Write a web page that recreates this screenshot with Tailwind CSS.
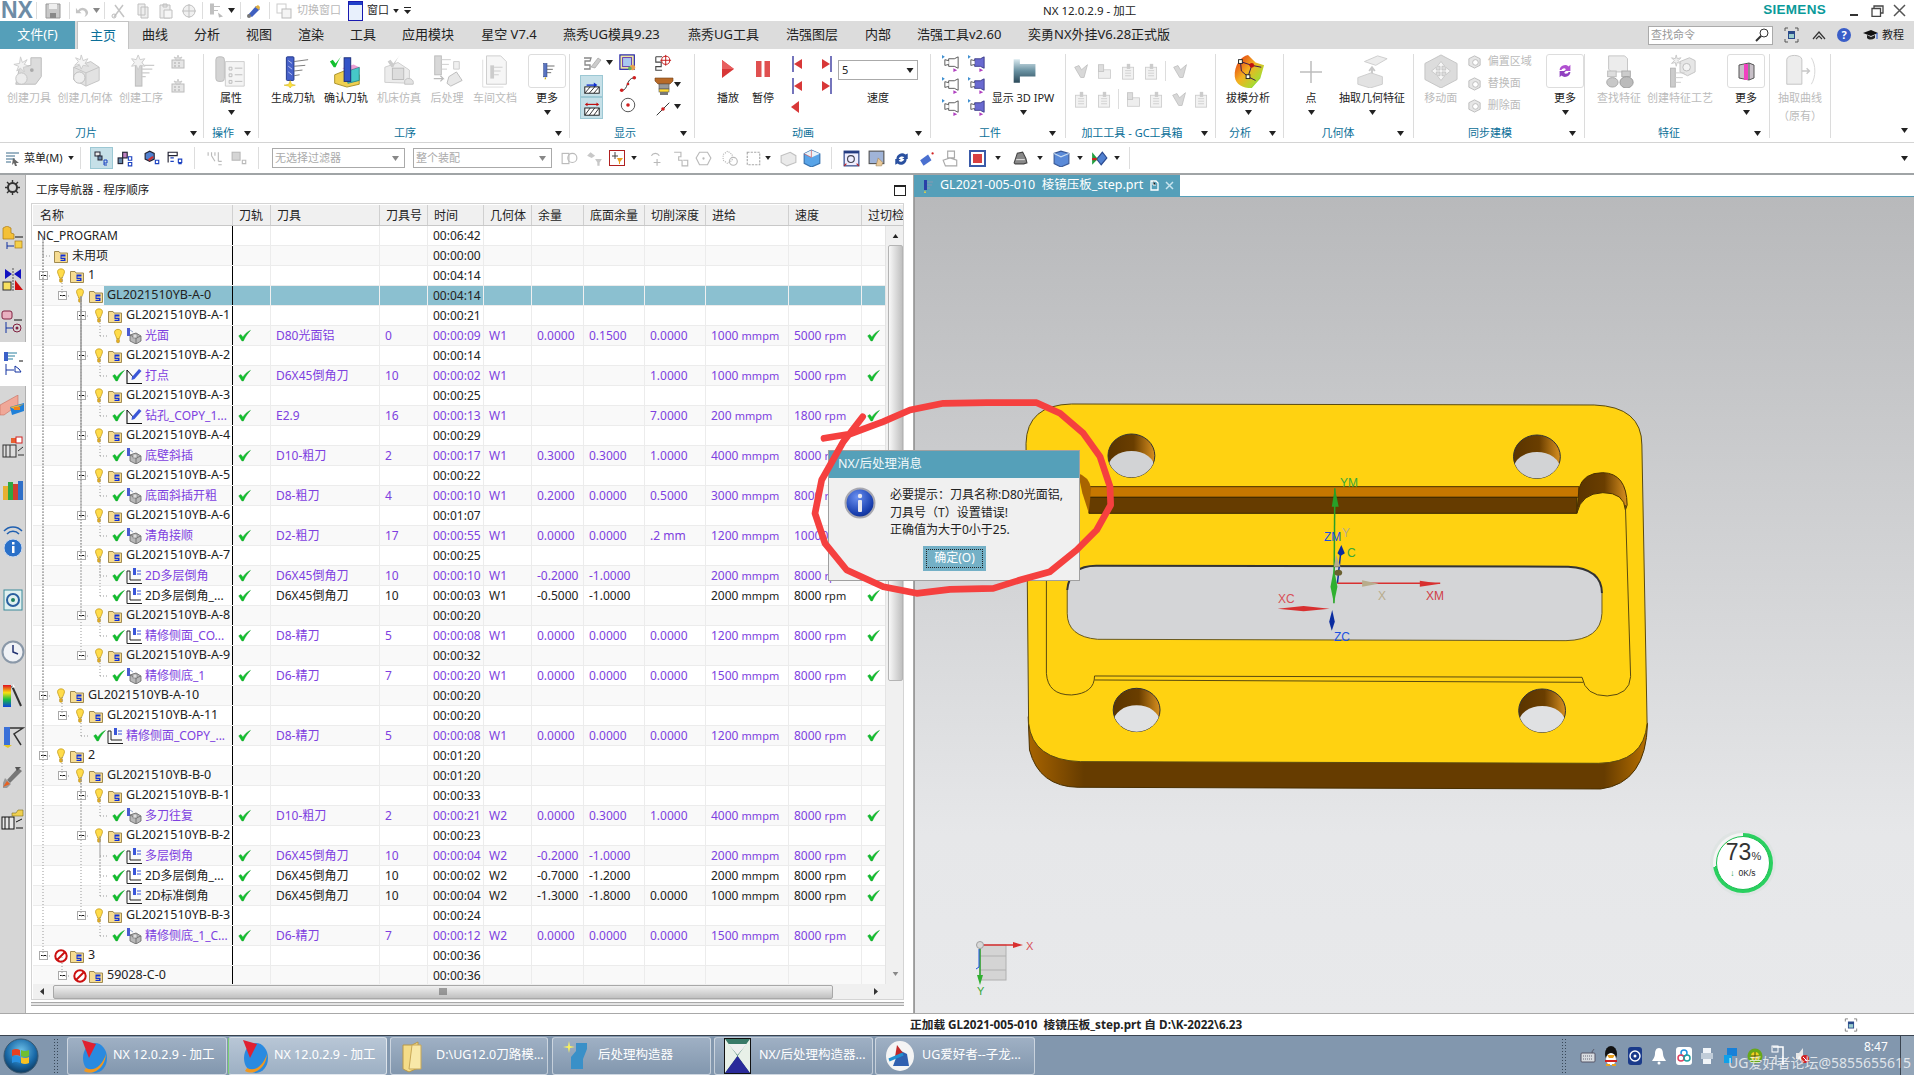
<!doctype html>
<html lang="zh-CN">
  <head>
    <meta charset="UTF-8" />
    <title>NX 12.0.2.9 - 加工</title>
    <script src="https://cdn.jsdelivr.net/npm/@tailwindcss/browser@4"></script>
  </head>
  <body class="font-['Noto_Sans','Noto_Sans_CJK_SC',sans-serif] text-[12px] text-[#222]">
    <!-- icon library -->
    <svg class="absolute w-0 h-0" xmlns="http://www.w3.org/2000/svg">
      <symbol id="arr" viewBox="0 0 7 5"><path d="M0 0h7L3.5 5z" fill="#222" /></symbol>
      <symbol id="arrg" viewBox="0 0 7 5"><path d="M0 0h7L3.5 5z" fill="#888" /></symbol>
      <symbol id="bulb" viewBox="0 0 10 18"><path d="M5 .7c2.6 0 4.3 1.4 4.3 3.6 0 2.6-2.2 5-2.6 8H3.3C2.9 9.300.7 6.900.7 4.300.7 2.100 2.400.7 5 .7z" fill="#ffdc4a" stroke="#c49a18" /><rect x="3.200" y="13" width="3.600" height="4.300" rx="1" fill="#e8b020" stroke="#a88010" stroke-width=".6" /></symbol>
      <symbol id="folder" viewBox="0 0 14 14"><path d="M.5 2.500h4.500l1 1.500h7.500v9.500H.5z" fill="#f6dc92" stroke="#a08a50" /><path d="M6.500 5.500h5v2h-4v1.300h4v3.200h-5v-1.200h3.600v-.9h-3.600z" fill="#1030d8" /></symbol>
      <symbol id="check" viewBox="0 0 14 14"><path d="M.8 7.400 3.200 6l2 2.800C7.200 5.600 9.800 3.200 13.400 1.500 10.600 4.400 8 8 5.800 12.800H4.200z" fill="#12c02e" stroke="#0ca024" stroke-width=".5" /></symbol>
      <symbol id="nosign" viewBox="0 0 14 14"><circle cx="7" cy="7" r="5.700" fill="#fff" stroke="#cc1010" stroke-width="2" /><path d="m3 11 8-8" stroke="#cc1010" stroke-width="2" /></symbol>
      <symbol id="opm" viewBox="0 0 16 16"><path d="M4 7l6-2 5 3v5l-5 3-6-3z" fill="#b8b8b8" stroke="#666" stroke-width=".8" /><path d="M4 7l6 3 5-2M10 10v6" fill="none" stroke="#666" stroke-width=".8" /><rect x="7" y="6" width="4" height="4" fill="#ddd" stroke="#777" stroke-width=".6" /><rect x="1" y="0" width="3" height="8" fill="#4a5ad0" /><path d="M4 2l3 2" stroke="#9ac" /></symbol>
      <symbol id="opd" viewBox="0 0 16 16"><path d="M1 2v13.500h15" fill="none" stroke="#111" stroke-width="1.100" /><path d="m1 2 7 8" stroke="#111" /><path d="m6 9 7-8 2.500 2-7 8-3 1z" fill="#3a56d8" /></symbol>
      <symbol id="opp" viewBox="0 0 16 16"><path d="M1 3v12.500h15M1 3h3v9h11" fill="none" stroke="#222" stroke-width="1" /><rect x="7" y="0" width="3" height="7" fill="#3a56d8" /><path d="M11 3h4M11 6h4" stroke="#3a56d8" /></symbol>
      <symbol id="ct" viewBox="0 0 36 36"><path d="M20 4h11v20l-6 8H4l4-18 12-2z" fill="#dcdcdc" stroke="#bbb" /><circle cx="21" cy="17" r="2" fill="#aaa" /><path d="M9 3l2 6 5-3-3 5 5 2-6 1 1 5-4-4-4 3 2-5-5-2 6-1z" fill="#f2f2f2" stroke="#ccc" /><circle cx="10" cy="26" r="6" fill="#ececec" stroke="#c4c4c4" /></symbol>
      <symbol id="cg" viewBox="0 0 36 36"><path d="M6 14l18-6 9 6v14l-14 6-13-7z" fill="#e2e2e2" stroke="#c4c4c4" /><path d="M6 14l13 6 14-6M19 20v14" fill="none" stroke="#c4c4c4" /><circle cx="12" cy="25" r="6" fill="#eee" stroke="#bbb" /><path d="M14 1l2 6 5-2-3 5 4 3-6-1-2 4-2-5-5 1 4-4-3-4 5 2z" fill="#f4f4f4" stroke="#ccc" /></symbol>
      <symbol id="co" viewBox="0 0 36 36"><rect x="12" y="8" width="7" height="26" fill="#d4d4d4" stroke="#bbb" /><path d="M19 12h13M19 16h11M19 20h8M19 24h4" stroke="#ccc" stroke-width="1.400" /><path d="M15 1l2 5 5-1-3 4 3 4-5-1-2 5-2-5-5 1 3-4-3-4 5 1z" fill="#f2f2f2" stroke="#ccc" /></symbol>
      <symbol id="cs" viewBox="0 0 16 16"><rect x="2" y="6" width="12" height="8" fill="#e6e6e6" stroke="#bbb" /><path d="M4 9h2M8 9h2M4 12h2M8 12h2" stroke="#aaa" /><path d="M8 1l1 3 3-1-2 3H6L4 3l3 1z" fill="#ddd" stroke="#bbb" stroke-width=".6" /></symbol>
      <symbol id="prop" viewBox="0 0 36 36"><rect x="2" y="3" width="9" height="26" rx="3" fill="#d4d4d4" stroke="#bbb" /><path d="M12 8h20v26H12z" fill="#f4f4f4" stroke="#ccc" /><path d="M16 14h3v3h-3zM22 15h8M16 21h3v3h-3zM22 22h8M16 28h3v3h-3zM22 29h8" fill="none" stroke="#bbb" /></symbol>
      <symbol id="gen" viewBox="0 0 36 36"><rect x="11" y="3" width="8" height="25" rx="1" fill="#4660c8" stroke="#1e3488" /><path d="M13 7l4 3M13 13l4 3M13 19l4 3" stroke="#b8c4f0" /><path d="M19 8 34 6M19 13l12-1M19 18l9-1M19 23l6-1" stroke="#777" /><path d="M15 28l1.500 4 4 1-4 1-1.500 2-1.500-2-5-1 5-1z" fill="#ffe23c" stroke="#c8a800" stroke-width=".5" /></symbol>
      <symbol id="ver" viewBox="0 0 36 36"><path d="M6 22l10-4 16 4v10l-13 3-13-4z" fill="#f0d050" stroke="#a89028" /><path d="M20 18l12-4v14l-12 3z" fill="#46c8c8" stroke="#2a8a8a" /><path d="M20 18l12-4-6-3-12 4z" fill="#e060b8" opacity=".6" /><rect x="16" y="4" width="7" height="25" fill="#3454c8" stroke="#1a2c78" /><path d="M1 8l3-2 3 4 7-9c-3 4-5 8-7 13H5z" fill="#12c02e" /></symbol>
      <symbol id="mach" viewBox="0 0 36 36"><path d="M3 30V14l14-5 12 8v14z" fill="#ececec" stroke="#ccc" /><rect x="11" y="15" width="12" height="12" fill="#ddd" stroke="#bbb" /><path d="M6 8l3-2 3 4 7-9c-3 4-5 8-7 13h-2z" fill="#ccc" /><path d="M24 28a5 5 0 0 1 9 4H24z" fill="#e2e2e2" stroke="#c4c4c4" /></symbol>
      <symbol id="post" viewBox="0 0 36 36"><rect x="5" y="2" width="7" height="20" fill="#d8d8d8" stroke="#bbb" /><path d="M12 6h10M12 11h8M12 16h6" stroke="#ccc" /><path d="M20 24l8-5 6 9-12 6-4-3z" fill="#e8e8e8" stroke="#bbb" /><path d="M4 26h10l-3-3m3 3-3 3" fill="none" stroke="#bbb" stroke-width="1.300" /><path d="M25 8h6v8h-6z" fill="#f0f0f0" stroke="#ccc" /></symbol>
      <symbol id="docu" viewBox="0 0 36 36"><path d="M9 2h15l6 6v24H9z" fill="#f6f6f6" stroke="#ccc" /><path d="M5 6v29h22" fill="none" stroke="#ddd" /><rect x="13" y="12" width="4" height="14" fill="#ccc" /><path d="M17 14h9M17 18h7M17 22h5" stroke="#ccc" /></symbol>
      <symbol id="more" viewBox="0 0 24 24"><rect x="8" y="3" width="4" height="16" fill="#5a74c0" stroke="#223a80" stroke-width=".6" /><path d="M12 6h9M12 10h7M12 14h5" stroke="#555" /><path d="M10 19l1 3h-2z" fill="#c8a800" /></symbol>
      <symbol id="hatch1" viewBox="0 0 20 20"><path d="M4 9h10" stroke="#1030d0" stroke-width="1.500" /><path d="M12 6l4 3-4 3z" fill="#1030d0" /><rect x="2" y="11" width="16" height="7" fill="#fff" stroke="#111" /><path d="M2 18l6-7M7 18l6-7M12 18l6-7" stroke="#222" /></symbol>
      <symbol id="hatch2" viewBox="0 0 20 20"><path d="M4 6h12" stroke="#c01010" stroke-width="1.300" /><path d="M2 6l3-2v4zM18 6l-3-2v4z" fill="#c01010" /><rect x="2" y="10" width="16" height="8" fill="#fff" stroke="#111" /><path d="M2 18l6-8M7 18l6-8M12 18l6-8" stroke="#222" /></symbol>
      <symbol id="disp1" viewBox="0 0 20 20"><path d="M2 4h7l-1 3H3v4h5v4H2" fill="none" stroke="#888" stroke-width="1.300" /><path d="M9 13 16 4l3 2-6 8z" fill="#ccc" stroke="#999" stroke-width=".6" /></symbol>
      <symbol id="colorbox" viewBox="0 0 20 20"><rect x="1" y="1" width="16" height="16" fill="#f0e8a0" stroke="#2020a8" stroke-width="1.300" /><rect x="4" y="4" width="10" height="10" fill="#a8c8f0" stroke="#6030b0" /><circle cx="15" cy="15" r="3" fill="#e8a050" /><circle cx="12" cy="16" r="2" fill="#60b060" /></symbol>
      <symbol id="curve" viewBox="0 0 20 20"><path d="M3 17c8 0 4-13 14-14" fill="none" stroke="#222" /><circle cx="3" cy="17" r="2" fill="#d02020" /><circle cx="17" cy="3" r="2" fill="#d02020" /><circle cx="10" cy="10" r="1.500" fill="#d02020" /></symbol>
      <symbol id="circ" viewBox="0 0 20 20"><circle cx="10" cy="10" r="7.500" fill="#fff" stroke="#444" /><circle cx="10" cy="10" r="2" fill="#d02020" /></symbol>
      <symbol id="tgt" viewBox="0 0 20 20"><path d="M2 3h7M2 3v6h6v5H2v4h7" fill="none" stroke="#444" stroke-width="1.200" /><circle cx="13" cy="7" r="4.500" fill="none" stroke="#c01010" /><path d="M13 1v12M7 7h12" stroke="#c01010" /></symbol>
      <symbol id="cutter" viewBox="0 0 20 20"><path d="M1 2h18v3l-3 3H4L1 5z" fill="#b86a28" stroke="#70401a" stroke-width=".6" /><rect x="5" y="8" width="10" height="5" fill="#999" stroke="#555" stroke-width=".6" /><rect x="5" y="13" width="10" height="3" fill="#ffd830" stroke="#555" stroke-width=".6" /><rect x="6" y="16" width="8" height="3" fill="#777" /></symbol>
      <symbol id="line" viewBox="0 0 20 20"><path d="M3 17 17 3" stroke="#222" /><circle cx="10" cy="10" r="2" fill="#d02020" /></symbol>
      <symbol id="step" viewBox="0 0 14 16"><path d="M3 0v16" stroke="#2a2a98" stroke-width="1.300" /><path d="M12 3v10L4 8z" fill="#d83838" /></symbol>
      <symbol id="step2" viewBox="0 0 14 16"><path d="M11 0v16" stroke="#2a2a98" stroke-width="1.300" /><path d="M2 3v10l8-5z" fill="#d83838" /></symbol>
      <symbol id="play" viewBox="0 0 20 20"><path d="M4 1v18l12-9z" fill="#d83838" /><path d="M4 1l12 9H4z" fill="#e86060" /></symbol>
      <symbol id="pause" viewBox="0 0 20 20"><rect x="3" y="2" width="5.500" height="16" fill="#e05050" /><rect x="11.500" y="2" width="5.500" height="16" fill="#e05050" /></symbol>
      <symbol id="ipw1" viewBox="0 0 20 20"><path d="M7 5h6l4-2v12l-4-2H7V5z" fill="#fff" stroke="#444" stroke-width=".9" /><path d="M7 7 3 6v6l4-1" fill="#fff" stroke="#444" stroke-width=".9" /><path d="M0 1l3 2-3 2z" fill="#4090d0" /><path d="M12 15l4 2-4 2z" fill="#b040c0" /></symbol>
      <symbol id="ipw2" viewBox="0 0 20 20"><path d="M7 5h6l4-2v12l-4-2H7V5z" fill="#6a6ad0" stroke="#333380" stroke-width=".9" /><path d="M7 7 3 6v6l4-1" fill="#fff" stroke="#444" stroke-width=".9" /><path d="M0 1l3 2-3 2z" fill="#4090d0" /><path d="M12 15l4 2-4 2z" fill="#b040c0" /></symbol>
      <symbol id="ipw" viewBox="0 0 36 36"><defs><linearGradient id="gi" x1="0" y1="0" x2="0" y2="1"><stop offset="0" stop-color="#d8e8ee" /><stop offset=".5" stop-color="#6890a0" /><stop offset="1" stop-color="#2c4a5a" /></linearGradient></defs><path d="M6 3h8v6h20v16H14v8H6z" fill="url(#gi)" /></symbol>
      <symbol id="gv" viewBox="0 0 20 20"><path d="M2 5l5-2 3 5 7-6-4 15H9z" fill="#d8d8d8" stroke="#c0c0c0" /></symbol>
      <symbol id="gb" viewBox="0 0 20 20"><rect x="3" y="8" width="14" height="10" fill="#eee" stroke="#ccc" /><rect x="3" y="2" width="6" height="8" fill="#ddd" stroke="#c4c4c4" /></symbol>
      <symbol id="gd" viewBox="0 0 20 20"><rect x="3" y="5" width="13" height="14" fill="#f2f2f2" stroke="#ccc" /><path d="M6 9h7M6 12h7M6 15h7" stroke="#ccc" /><rect x="8" y="1" width="4" height="6" fill="#ccc" /></symbol>
      <symbol id="draft" viewBox="0 0 36 36"><defs><linearGradient id="gd2" x1="0" y1="0" x2="1" y2="1"><stop offset="0" stop-color="#e02010" /><stop offset=".45" stop-color="#f4b020" /><stop offset=".75" stop-color="#b0d830" /><stop offset="1" stop-color="#20c040" /></linearGradient></defs><path d="M4 24C3 12 11 2 18 1l8 8 9 3-4 14-9 10C12 36 5 32 4 24z" fill="url(#gd2)" /><path d="M10 8l12 4-4 12-7-6zM22 12l10 2M18 24l8 4" fill="none" stroke="#331055" /><rect x="8" y="6" width="4" height="4" fill="#ffe" stroke="#222" /><rect x="16" y="22" width="4" height="4" fill="#ffe" stroke="#222" /><circle cx="22" cy="12" r="2.500" fill="#c01010" /></symbol>
      <symbol id="plus" viewBox="0 0 24 24"><path d="M12 1v22M1 12h22" stroke="#bdbdbd" stroke-width="1.500" /></symbol>
      <symbol id="extract" viewBox="0 0 36 36"><path d="M10 8l14-6 10 3-12 7z" fill="#ececec" stroke="#ccc" /><path d="M18 26V14m-3 4 3-4 3 4" fill="none" stroke="#c8c8c8" stroke-width="2" /><path d="M3 25l14-5 12 4v8l-13 4-13-4z" fill="#e2e2e2" stroke="#ccc" /></symbol>
      <symbol id="movef" viewBox="0 0 36 36"><path d="M18 1 35 10v17l-17 9L1 27V10z" fill="#dcdcdc" stroke="#c4c4c4" /><path d="M18 8l4 5h-3v4h4v-3l5 4-5 4v-3h-4v4h3l-4 5-4-5h3v-4h-4v3l-5-4 5-4v3h4v-4h-3z" fill="#f6f6f6" stroke="#bbb" stroke-width=".7" /></symbol>
      <symbol id="gsm" viewBox="0 0 16 16"><path d="M2 5l6-3 6 3v7l-6 3-6-3z" fill="#e6e6e6" stroke="#bbb" /><circle cx="9" cy="9" r="3" fill="#fff" stroke="#bbb" /></symbol>
      <symbol id="sync" viewBox="0 0 20 20"><path d="M4 9a6 6 0 0 1 10-4l2-2v7h-7l2-2a3 3 0 0 0-5 1z" fill="#b050d0" /><path d="M16 11a6 6 0 0 1-10 4l-2 2v-7h7l-2 2a3 3 0 0 0 5-1z" fill="#9040c0" /></symbol>
      <symbol id="feat" viewBox="0 0 36 36"><path d="M7 2h17l3 3v14H10L7 16z" fill="#ececec" stroke="#c4c4c4" /><rect x="6" y="18" width="9" height="6" fill="#ddd" stroke="#bbb" /><rect x="21" y="18" width="9" height="6" fill="#ccc" stroke="#aaa" /><ellipse cx="11" cy="30" rx="6" ry="5" fill="#c8c8c8" stroke="#a8a8a8" /><ellipse cx="26" cy="30" rx="7" ry="6" fill="#bbb" stroke="#999" /></symbol>
      <symbol id="cfeat" viewBox="0 0 36 36"><path d="M18 8l10-4 6 3v12l-8 4-8-4z" fill="#e6e6e6" stroke="#c4c4c4" /><circle cx="25" cy="14" r="4" fill="#f4f4f4" stroke="#bbb" /><rect x="8" y="15" width="5" height="20" fill="#ccc" stroke="#b4b4b4" /><path d="M13 20h10M13 25h8M13 30h6" stroke="#ccc" /><path d="M14 1l1 4 4-1-3 3 3 3-4-1-1 4-1-4-4 1 3-3-3-3 4 1z" fill="#f0f0f0" stroke="#c8c8c8" /></symbol>
      <symbol id="feat2" viewBox="0 0 20 20"><path d="M3 4l10-2 5 2v13l-5 2-10-2z" fill="#c8c0c8" stroke="#555" /><rect x="8" y="3" width="4" height="16" fill="#f040c0" /><path d="M13 2v17" stroke="#555" /></symbol>
      <symbol id="curvex" viewBox="0 0 36 36"><path d="M4 6c0-6 16-6 16 0v26H4z" fill="#ededed" stroke="#c4c4c4" /><path d="M20 18h8m-3-3 3 3-3 3" fill="none" stroke="#c8c8c8" stroke-width="1.500" /><path d="M30 4c5 8 5 20 0 28" fill="none" stroke="#d4d4d4" /></symbol>
    </svg>

    <div class="relative w-[1914px] h-[1075px] overflow-hidden bg-white flex flex-col">
      <!-- title bar -->
      <header class="h-[21px] flex items-center bg-white shrink-0">
        <div class="w-[1043px] flex items-center">
          <span class="w-[36px] pl-[1px] font-['Liberation_Sans'] font-bold text-[23px] leading-[21px] text-[#6d8ca6]">NX</span>
          <i class="w-px h-[17px] bg-[#ddd]"></i>
          <svg class="ml-[8px] w-[16px] h-[16px]" viewBox="0 0 16 16"><path d="M1 1h14v14H1z" fill="#c8c8c8" stroke="#999" /><rect x="4" y="1" width="8" height="5" fill="#eee" /><rect x="5" y="10" width="6" height="5" fill="#888" /></svg>
          <i class="ml-[8px] w-px h-[17px] bg-[#ddd]"></i>
          <svg class="ml-[5px] w-[15px] h-[15px]" viewBox="0 0 16 16"><path d="M3 8a6 6 0 0 1 11 2c0 2-2 4-4 5 1-2 2-3 1-5-1-3-4-3-6-1l2 2H1V5z" fill="#c4c4c4" /></svg>
          <svg class="ml-[3px] w-[7px] h-[5px]"><use href="#arrg" /></svg>
          <i class="ml-[4px] w-px h-[17px] bg-[#ddd]"></i>
          <svg class="ml-[6px] w-[16px] h-[16px]" viewBox="0 0 16 16"><path d="M3 14 12 2M13 14 4 2" stroke="#c4c4c4" stroke-width="1.500" /><circle cx="3" cy="13" r="2" fill="none" stroke="#bbb" /></svg>
          <svg class="ml-[8px] w-[16px] h-[16px]" viewBox="0 0 16 16"><path d="M3 1h7v11H3zM6 4h7v11H6z" fill="#eee" stroke="#c0c0c0" /></svg>
          <svg class="ml-[7px] w-[16px] h-[16px]" viewBox="0 0 16 16"><path d="M2 2h10v13H2zM5 1h4v3H5z" fill="#eee" stroke="#c0c0c0" /><path d="M6 7h8v8H6z" fill="#f6f6f6" stroke="#c0c0c0" /></svg>
          <svg class="ml-[7px] w-[16px] h-[16px]" viewBox="0 0 16 16"><circle cx="8" cy="8" r="6" fill="#f0f0f0" stroke="#c0c0c0" /><path d="M1 8h14M8 1v14" stroke="#c0c0c0" /></svg>
          <i class="ml-[5px] w-px h-[17px] bg-[#ddd]"></i>
          <svg class="ml-[6px] w-[16px] h-[17px]" viewBox="0 0 16 16"><rect x="1" y="1" width="4" height="11" fill="#c0c0c0" /><path d="M5 4h6M5 8h4" stroke="#c0c0c0" /><path d="M9 10l5 4-4 1z" fill="#bbb" /></svg>
          <svg class="ml-[3px] w-[7px] h-[5px]"><use href="#arr" /></svg>
          <i class="ml-[5px] w-px h-[17px] bg-[#ddd]"></i>
          <svg class="ml-[5px] w-[16px] h-[16px]" viewBox="0 0 16 16"><path d="M2 12 10 3l4 3-8 8z" fill="#4060c0" /><path d="M9 4l4 3 1-3-2-2z" fill="#e0b040" /><circle cx="3" cy="13" r="2" fill="#777" /></svg>
          <i class="ml-[7px] w-px h-[17px] bg-[#ddd]"></i>
          <svg class="ml-[6px] w-[16px] h-[16px]" viewBox="0 0 16 16"><rect x="1" y="1" width="9" height="9" fill="none" stroke="#ccc" /><rect x="6" y="6" width="9" height="9" fill="#f4f4f4" stroke="#bbb" /></svg>
          <span class="ml-[5px] w-[44px] text-[11px] text-[#b8b8b8] whitespace-nowrap">切换窗口</span>
          <svg class="ml-[7px] w-[15px] h-[20px]" viewBox="0 0 15 20"><rect x=".5" y=".5" width="14" height="19" fill="#e8f0fc" stroke="#1a1ab0" /><rect x="1" y="1" width="13" height="3" fill="#2040c8" /></svg>
          <span class="ml-[4px] w-[24px] text-[11px] whitespace-nowrap">窗口</span>
          <svg class="ml-[2px] w-[6px] h-[4px]"><use href="#arr" /></svg>
          <svg class="ml-[5px] w-[7px] h-[7px]" viewBox="0 0 7 7"><path d="M0 0h7v1H0zM0 3h7L3.500 7z" fill="#222" /></svg>
        </div>
        <span class="text-[11.500px] whitespace-nowrap">NX 12.0.2.9 - 加工</span>
        <div class="flex-1 flex items-center justify-end">
          <span class="font-['Liberation_Sans'] font-bold text-[13.500px] tracking-[.3px] text-[#0a9a9a]">SIEMENS</span>
          <i class="ml-[24px] w-[8px] h-[2px] mt-[8px] bg-[#333]"></i>
          <svg class="ml-[13px] w-[13px] h-[12px]" viewBox="0 0 13 12"><path d="M3 3V1h9v7h-2M1 3.500h8.500v8H1z" fill="none" stroke="#444" stroke-width="1.300" /></svg>
          <svg class="ml-[9px] mr-[8px] w-[13px] h-[13px]" viewBox="0 0 13 13"><path d="M1 1l11 11M12 1 1 12" stroke="#555" stroke-width="1.500" /></svg>
        </div>
      </header>

      <!-- tabs -->
      <nav class="h-[28px] bg-[#dcdcdc] flex items-center shrink-0 text-[13px] text-[#222]">
        <span class="w-[75px] h-full bg-[#559fb9] text-white flex items-center justify-center">文件(F)</span>
        <span class="ml-[2px] w-[52px] h-full bg-white border-t border-x border-[#c4c4c4] text-[#0b6f98] flex items-center justify-center">主页</span>
        <span class="w-[52px] text-center">曲线</span>
        <span class="w-[52px] text-center">分析</span>
        <span class="w-[52px] text-center">视图</span>
        <span class="w-[52px] text-center">渲染</span>
        <span class="w-[52px] text-center">工具</span>
        <span class="w-[78px] text-center">应用模块</span>
        <span class="w-[84px] text-center whitespace-nowrap">星空 V7.4</span>
        <span class="ml-[12px] w-[125px] whitespace-nowrap">燕秀UG模具9.23</span>
        <span class="w-[98px] whitespace-nowrap">燕秀UG工具</span>
        <span class="w-[79px] whitespace-nowrap">浩强图层</span>
        <span class="w-[52px] whitespace-nowrap">内部</span>
        <span class="w-[111px] whitespace-nowrap">浩强工具v2.60</span>
        <span class="w-[200px] whitespace-nowrap">奕勇NX外挂V6.28正式版</span>
        <span class="ml-[420px] w-[125px] h-[19px] bg-white border border-[#aaa] flex items-center justify-between pl-[2px] pr-[3px] text-[11px] text-[#999]">查找命令
          <svg class="w-[14px] h-[14px]" viewBox="0 0 14 14"><circle cx="9" cy="5" r="4" fill="#fff" stroke="#333" /><path d="M6 8 1 13" stroke="#333" stroke-width="2" /></svg>
        </span>
        <svg class="ml-[11px] w-[15px] h-[16px]" viewBox="0 0 15 16"><path d="M1 4V1h3M11 1h3v3M14 12v3h-3M4 15H1v-3" fill="none" stroke="#555" /><rect x="4" y="4" width="7" height="8" fill="#2a4a8a" /><rect x="5" y="7" width="5" height="4" fill="#9cc" /></svg>
        <svg class="ml-[13px] w-[14px] h-[10px]" viewBox="0 0 14 10"><path d="M1 9l6-7 6 7M4 9l3-3 3 3" fill="none" stroke="#333" stroke-width="1.200" /></svg>
        <span class="ml-[11px] w-[14px] h-[14px] rounded-full bg-[#3a5ec8] text-white text-[11px] leading-[14px] font-bold text-center">?</span>
        <svg class="ml-[12px] w-[15px] h-[11px]" viewBox="0 0 15 11"><path d="M0 3 8 0l7 3-7 3z" fill="#111" /><path d="M4 5v3c2 2 5 2 8 0V5L8 7z" fill="#222" /><path d="M14 3v6" stroke="#1a50d0" /></svg>
        <span class="ml-[4px] text-[11px] whitespace-nowrap">教程</span>
      </nav>

      <!-- ribbon -->
      <section class="h-[94px] pt-[5px] flex shrink-0 bg-white border-b border-[#d4d4d4]">
        <div class="w-[204px] h-[84px] flex flex-col border-r border-[#dcdcdc]">
          <div class="h-[70px] flex text-[11px] text-[#bbb]">
            <div class="ml-[6px] w-[46px] flex flex-col items-center"><svg class="w-[36px] h-[34px]"><use href="#ct" /></svg><span class="mt-[2px] whitespace-nowrap">创建刀具</span></div>
            <div class="ml-[8px] w-[50px] flex flex-col items-center"><svg class="w-[36px] h-[34px]"><use href="#cg" /></svg><span class="mt-[2px] whitespace-nowrap">创建几何体</span></div>
            <div class="ml-[8px] w-[46px] flex flex-col items-center"><svg class="w-[36px] h-[34px]"><use href="#co" /></svg><span class="mt-[2px] whitespace-nowrap">创建工序</span></div>
            <div class="ml-[6px] flex flex-col gap-[8px]"><svg class="w-[16px] h-[16px]"><use href="#cs" /></svg><svg class="w-[16px] h-[16px]"><use href="#cs" /></svg></div>
          </div>
          <div class="h-[14px] pt-[4px] flex items-center text-[11px] text-[#0b6f98]"><span class="w-[190px] text-center pr-[18px]">刀片</span><svg class="w-[7px] h-[5px]"><use href="#arr" /></svg></div>
        </div>

        <div class="w-[55px] h-[84px] flex flex-col border-r border-[#dcdcdc]">
          <div class="h-[70px] flex flex-col items-center text-[11px]"><svg class="w-[36px] h-[34px]"><use href="#prop" /></svg><span class="mt-[2px]">属性</span><svg class="mt-[3px] w-[7px] h-[5px]"><use href="#arr" /></svg></div>
          <div class="h-[14px] pt-[4px] flex items-center text-[11px] text-[#0b6f98]"><span class="ml-[8px] w-[32px]">操作</span><svg class="w-[7px] h-[5px]"><use href="#arr" /></svg></div>
        </div>

        <div class="w-[311px] h-[84px] flex flex-col border-r border-[#dcdcdc]">
          <div class="h-[70px] flex text-[11px]">
            <div class="ml-[10px] w-[48px] flex flex-col items-center"><svg class="w-[36px] h-[34px]"><use href="#gen" /></svg><span class="mt-[2px] whitespace-nowrap">生成刀轨</span></div>
            <div class="ml-[5px] w-[48px] flex flex-col items-center"><svg class="w-[36px] h-[34px]"><use href="#ver" /></svg><span class="mt-[2px] whitespace-nowrap">确认刀轨</span></div>
            <div class="ml-[5px] w-[48px] flex flex-col items-center text-[#bbb]"><svg class="w-[36px] h-[34px]"><use href="#mach" /></svg><span class="mt-[2px] whitespace-nowrap">机床仿真</span></div>
            <div class="w-[48px] flex flex-col items-center text-[#bbb]"><svg class="w-[36px] h-[34px]"><use href="#post" /></svg><span class="mt-[2px]">后处理</span></div>
            <div class="w-[48px] flex flex-col items-center text-[#bbb]"><svg class="w-[36px] h-[34px]"><use href="#docu" /></svg><span class="mt-[2px] whitespace-nowrap">车间文档</span></div>
            <div class="ml-[9px] w-[38px] flex flex-col items-center"><span class="w-[38px] h-[34px] rounded-[3px] border border-[#ddd] flex items-center justify-center"><svg class="w-[20px] h-[20px]"><use href="#more" /></svg></span><span class="mt-[2px]">更多</span><svg class="mt-[3px] w-[7px] h-[5px]"><use href="#arr" /></svg></div>
          </div>
          <div class="h-[14px] pt-[4px] flex items-center text-[11px] text-[#0b6f98]"><span class="w-[296px] text-center pr-[4px]">工序</span><svg class="w-[7px] h-[5px]"><use href="#arr" /></svg></div>
        </div>

        <div class="w-[125px] h-[84px] flex flex-col border-r border-[#dcdcdc]">
          <div class="h-[70px] flex">
            <div class="ml-[10px] w-[23px] flex flex-col items-center">
              <svg class="h-[20px] w-[20px] mb-[1px]"><use href="#disp1" /></svg>
              <span class="w-[23px] h-[22px] bg-[#c6e0e8] border border-[#9cc8d4] flex items-center justify-center"><svg class="w-[18px] h-[18px]"><use href="#hatch1" /></svg></span>
              <span class="w-[23px] h-[22px] bg-[#c6e0e8] border border-[#9cc8d4] flex items-center justify-center"><svg class="w-[18px] h-[18px]"><use href="#hatch2" /></svg></span>
            </div>
            <div class="ml-[3px] pt-[6px]"><svg class="w-[7px] h-[5px]"><use href="#arr" /></svg></div>
            <div class="ml-[6px] w-[20px] flex flex-col gap-[3px]"><svg class="w-[18px] h-[18px]"><use href="#colorbox" /></svg><svg class="w-[18px] h-[18px]"><use href="#curve" /></svg><svg class="w-[18px] h-[18px]"><use href="#circ" /></svg></div>
            <div class="ml-[15px] w-[18px] flex flex-col gap-[3px]"><svg class="w-[18px] h-[18px]"><use href="#tgt" /></svg><svg class="w-[20px] h-[22px]"><use href="#cutter" /></svg><svg class="w-[18px] h-[18px]"><use href="#line" /></svg></div>
            <div class="ml-[2px] pt-[28px] flex flex-col gap-[17px]"><svg class="w-[7px] h-[5px]"><use href="#arr" /></svg><svg class="w-[7px] h-[5px]"><use href="#arr" /></svg></div>
          </div>
          <div class="h-[14px] pt-[4px] flex items-center text-[11px] text-[#0b6f98]"><span class="w-[110px] text-center">显示</span><svg class="w-[7px] h-[5px]"><use href="#arr" /></svg></div>
        </div>

        <div class="w-[236px] h-[84px] flex flex-col border-r border-[#dcdcdc]">
          <div class="h-[70px] flex text-[11px]">
            <div class="ml-[19px] w-[28px] flex flex-col items-center"><svg class="mt-[5px] w-[20px] h-[20px]"><use href="#play" /></svg><span class="mt-[11px]">播放</span></div>
            <div class="ml-[7px] w-[28px] flex flex-col items-center"><svg class="mt-[5px] w-[20px] h-[20px]"><use href="#pause" /></svg><span class="mt-[11px]">暂停</span></div>
            <div class="ml-[13px] w-[54px] grid grid-cols-[30px_24px] grid-rows-[22px_22px_22px] pt-[2px] content-start">
              <svg class="w-[14px] h-[16px]"><use href="#step" /></svg><svg class="w-[14px] h-[16px]"><use href="#step2" /></svg>
              <svg class="w-[14px] h-[16px]"><use href="#step" /></svg><svg class="w-[14px] h-[16px]"><use href="#step2" /></svg>
              <svg class="w-[10px] h-[14px]" viewBox="0 0 10 14"><path d="M9 1v12L1 7z" fill="#d83838" /></svg>
            </div>
            <div class="ml-[-6px] w-[80px] flex flex-col items-center">
              <div class="mt-[6px] w-[80px] h-[20px] border border-[#aaa] flex items-center justify-between px-[3px]"><span>5</span><svg class="w-[8px] h-[5px]"><use href="#arr" /></svg></div>
              <span class="mt-[10px]">速度</span>
            </div>
          </div>
          <div class="h-[14px] pt-[4px] flex items-center text-[11px] text-[#0b6f98]"><span class="w-[216px] text-center">动画</span><svg class="w-[7px] h-[5px] ml-[4px]"><use href="#arr" /></svg></div>
        </div>

        <div class="w-[135px] h-[84px] flex flex-col border-r border-[#dcdcdc]">
          <div class="h-[70px] flex text-[11px]">
            <div class="ml-[11px] w-[46px] grid grid-cols-[26px_20px] grid-rows-[22px_22px_22px] content-start">
              <svg class="w-[19px] h-[19px]"><use href="#ipw1" /></svg><svg class="w-[19px] h-[19px]"><use href="#ipw2" /></svg>
              <svg class="w-[19px] h-[19px]"><use href="#ipw1" /></svg><svg class="w-[19px] h-[19px]"><use href="#ipw2" /></svg>
              <svg class="w-[19px] h-[19px]"><use href="#ipw1" /></svg><svg class="w-[19px] h-[19px]"><use href="#ipw2" /></svg>
            </div>
            <div class="ml-[3px] w-[64px] flex flex-col items-center"><svg class="w-[28px] h-[34px]"><use href="#ipw" /></svg><span class="mt-[2px] whitespace-nowrap">显示 3D IPW</span><svg class="mt-[3px] w-[7px] h-[5px]"><use href="#arr" /></svg></div>
          </div>
          <div class="h-[14px] pt-[4px] flex items-center text-[11px] text-[#0b6f98]"><span class="w-[118px] text-center">工件</span><svg class="w-[7px] h-[5px]"><use href="#arr" /></svg></div>
        </div>

        <div class="w-[150px] h-[84px] flex flex-col border-r border-[#dcdcdc]">
          <div class="h-[70px] flex flex-col gap-[8px] pt-[7px] pl-[7px]">
            <div class="flex items-center"><svg class="w-[17px] h-[19px]"><use href="#gv" /></svg><svg class="ml-[6px] w-[17px] h-[19px]"><use href="#gb" /></svg><svg class="ml-[7px] w-[17px] h-[19px]"><use href="#gd" /></svg><svg class="ml-[6px] w-[17px] h-[19px]"><use href="#gd" /></svg><i class="ml-[5px] w-px h-[20px] bg-[#ddd]"></i><svg class="ml-[6px] w-[17px] h-[19px]"><use href="#gv" /></svg></div>
            <div class="flex items-center"><svg class="w-[17px] h-[19px]"><use href="#gd" /></svg><svg class="ml-[6px] w-[17px] h-[19px]"><use href="#gd" /></svg><i class="ml-[5px] w-px h-[20px] bg-[#ddd]"></i><svg class="ml-[6px] w-[17px] h-[19px]"><use href="#gb" /></svg><svg class="ml-[6px] w-[17px] h-[19px]"><use href="#gd" /></svg><svg class="ml-[6px] w-[17px] h-[19px]"><use href="#gv" /></svg><svg class="ml-[5px] w-[17px] h-[19px]"><use href="#gd" /></svg></div>
          </div>
          <div class="h-[14px] pt-[4px] flex items-center text-[11px] text-[#0b6f98]"><span class="w-[132px] text-center whitespace-nowrap">加工工具 - GC工具箱</span><svg class="ml-[3px] w-[7px] h-[5px]"><use href="#arr" /></svg></div>
        </div>

        <div class="w-[68px] h-[84px] flex flex-col border-r border-[#dcdcdc]">
          <div class="h-[70px] flex flex-col items-center text-[11px] pr-[3px]"><svg class="w-[36px] h-[34px]"><use href="#draft" /></svg><span class="mt-[2px] whitespace-nowrap">拔模分析</span><svg class="mt-[3px] w-[7px] h-[5px]"><use href="#arr" /></svg></div>
          <div class="h-[14px] pt-[4px] flex items-center text-[11px] text-[#0b6f98]"><span class="ml-[13px] w-[40px]">分析</span><svg class="w-[7px] h-[5px]"><use href="#arr" /></svg></div>
        </div>

        <div class="w-[130px] h-[84px] flex flex-col border-r border-[#dcdcdc]">
          <div class="h-[70px] flex text-[11px]">
            <div class="ml-[10px] w-[34px] flex flex-col items-center"><svg class="mt-[6px] w-[24px] h-[24px]"><use href="#plus" /></svg><span class="mt-[6px]">点</span><svg class="mt-[3px] w-[7px] h-[5px]"><use href="#arr" /></svg></div>
            <div class="ml-[8px] w-[72px] flex flex-col items-center"><svg class="w-[34px] h-[34px]"><use href="#extract" /></svg><span class="mt-[2px] whitespace-nowrap">抽取几何特征</span><svg class="mt-[3px] w-[7px] h-[5px]"><use href="#arr" /></svg></div>
          </div>
          <div class="h-[14px] pt-[4px] flex items-center text-[11px] text-[#0b6f98]"><span class="w-[113px] text-center pr-[5px]">几何体</span><svg class="w-[7px] h-[5px]"><use href="#arr" /></svg></div>
        </div>

        <div class="w-[171px] h-[84px] flex flex-col border-r border-[#dcdcdc]">
          <div class="h-[70px] flex text-[11px] text-[#bbb]">
            <div class="ml-[5px] w-[44px] flex flex-col items-center"><svg class="w-[34px] h-[34px]"><use href="#movef" /></svg><span class="mt-[2px]">移动面</span></div>
            <div class="ml-[4px] w-[76px] flex flex-col gap-[7px]">
              <div class="flex items-center gap-[6px] h-[15px] whitespace-nowrap"><svg class="w-[15px] h-[15px]"><use href="#gsm" /></svg>偏置区域</div>
              <div class="flex items-center gap-[6px] h-[15px]"><svg class="w-[15px] h-[15px]"><use href="#gsm" /></svg>替换面</div>
              <div class="flex items-center gap-[6px] h-[15px]"><svg class="w-[15px] h-[15px]"><use href="#gsm" /></svg>删除面</div>
            </div>
            <div class="ml-[4px] w-[38px] flex flex-col items-center text-[#222]"><span class="w-[38px] h-[34px] rounded-[3px] border border-[#ddd] flex items-center justify-center"><svg class="w-[18px] h-[18px]"><use href="#sync" /></svg></span><span class="mt-[2px]">更多</span><svg class="mt-[3px] w-[7px] h-[5px]"><use href="#arr" /></svg></div>
          </div>
          <div class="h-[14px] pt-[4px] flex items-center text-[11px] text-[#0b6f98]"><span class="w-[152px] text-center">同步建模</span><svg class="ml-[3px] w-[7px] h-[5px]"><use href="#arr" /></svg></div>
        </div>

        <div class="w-[185px] h-[84px] flex flex-col border-r border-[#dcdcdc]">
          <div class="h-[70px] flex text-[11px] text-[#bbb]">
            <div class="ml-[11px] w-[46px] flex flex-col items-center"><svg class="w-[34px] h-[34px]"><use href="#feat" /></svg><span class="mt-[2px] whitespace-nowrap">查找特征</span></div>
            <div class="ml-[5px] w-[66px] flex flex-col items-center"><svg class="w-[34px] h-[34px]"><use href="#cfeat" /></svg><span class="mt-[2px] whitespace-nowrap">创建特征工艺</span></div>
            <div class="ml-[14px] w-[38px] flex flex-col items-center text-[#222]"><span class="w-[38px] h-[34px] rounded-[3px] border border-[#ddd] flex items-center justify-center"><svg class="w-[20px] h-[20px]"><use href="#feat2" /></svg></span><span class="mt-[2px]">更多</span><svg class="mt-[3px] w-[7px] h-[5px]"><use href="#arr" /></svg></div>
          </div>
          <div class="h-[14px] pt-[4px] flex items-center text-[11px] text-[#0b6f98]"><span class="w-[168px] text-center">特征</span><svg class="ml-[1px] w-[7px] h-[5px]"><use href="#arr" /></svg></div>
        </div>

        <div class="w-[61px] h-[84px] flex flex-col items-center border-r border-[#dcdcdc] text-[11px] text-[#bbb]">
          <svg class="w-[34px] h-[34px]"><use href="#curvex" /></svg><span class="mt-[2px] whitespace-nowrap">抽取曲线</span><span class="leading-[16px] mt-[1px] whitespace-nowrap">（原有）</span>
        </div>
        <div class="flex-1 flex justify-end items-end pb-[9px] pr-[6px]"><svg class="w-[7px] h-[5px]"><use href="#arr" /></svg></div>
      </section>

      <!-- quick toolbar -->
      <section class="h-[32px] flex items-center shrink-0 bg-white border-b-2 border-[#a0a4a6] text-[11px]">
        <svg class="ml-[5px] w-[15px] h-[15px]" viewBox="0 0 15 15"><path d="M1 2h13M1 5h9M1 8h9M1 11h5" stroke="#3a6a8a" /><path d="M8 7l6 5-3 0 1 3-2 0-1-3-2 2z" fill="#666" /></svg>
        <span class="ml-[4px] w-[42px] whitespace-nowrap">菜单(M)</span>
        <svg class="ml-[2px] w-[6px] h-[4px]"><use href="#arr" /></svg>
        <i class="ml-[6px] w-px h-[22px] bg-[#ddd]"></i>
        <span class="ml-[9px] w-[23px] h-[22px] bg-[#c6e0e8] border border-[#9cc8d4] flex items-center justify-center"><svg class="w-[15px] h-[15px]" viewBox="0 0 15 15"><rect x="1" y="1" width="5" height="4" fill="#e8e8e8" stroke="#223" /><rect x="4" y="5" width="4" height="4" fill="#68a" stroke="#223" /><path d="M10 9h3v3h-3zM10 12v2h3" fill="none" stroke="#1a40c0" /></svg></span>
        <svg class="ml-[4px] w-[17px] h-[17px]" viewBox="0 0 15 15"><rect x="1" y="7" width="4" height="5" fill="#68a" stroke="#223" /><rect x="5" y="2" width="4" height="5" fill="#c080c0" stroke="#223" /><path d="M10 6h3v3h-3zM10 11h3v3h-3z" fill="none" stroke="#1a40c0" /></svg>
        <svg class="ml-[10px] w-[17px] h-[17px]" viewBox="0 0 15 15"><path d="M1 3l4-2 4 2v5l-4 2-4-2z" fill="#5080d0" stroke="#223" /><path d="M4 9 8 6" stroke="#d03030" stroke-width="2" /><path d="M10 9h3v3h-3z" fill="none" stroke="#1a40c0" /></svg>
        <svg class="ml-[6px] w-[17px] h-[17px]" viewBox="0 0 15 15"><path d="M1 2h8v3H1zM1 5v6" fill="none" stroke="#223" /><path d="M3 7h3M3 10h3" stroke="#1a40c0" /><path d="M10 8h3v3h-3zM10 12h3" fill="none" stroke="#1a40c0" /></svg>
        <i class="ml-[10px] w-px h-[22px] bg-[#ddd]"></i>
        <svg class="ml-[12px] w-[17px] h-[17px] opacity-40" viewBox="0 0 15 15"><path d="M1 2v3M4 2v3M7 2v3M10 2v3M4 5l3 5M10 5v5M10 10h3M10 13h3" fill="none" stroke="#555" /></svg>
        <svg class="ml-[7px] w-[17px] h-[17px] opacity-40" viewBox="0 0 15 15"><rect x="1" y="2" width="7" height="7" fill="#999" stroke="#555" /><path d="M10 9h3v3h-3z" fill="none" stroke="#555" /></svg>
        <i class="ml-[10px] w-px h-[22px] bg-[#ddd]"></i>
        <span class="ml-[13px] w-[133px] h-[20px] border border-[#aaa] flex items-center justify-between pl-[2px] pr-[5px] text-[#aaa] whitespace-nowrap">无选择过滤器<svg class="w-[7px] h-[5px]"><use href="#arrg" /></svg></span>
        <span class="ml-[8px] w-[139px] h-[20px] border border-[#aaa] flex items-center justify-between pl-[2px] pr-[5px] text-[#aaa]">整个装配<svg class="w-[7px] h-[5px]"><use href="#arrg" /></svg></span>
        <svg class="ml-[9px] w-[17px] h-[17px] opacity-40" viewBox="0 0 15 15"><rect x="1" y="3" width="6" height="9" fill="none" stroke="#555" /><circle cx="10" cy="7" r="4" fill="none" stroke="#555" /></svg>
        <svg class="ml-[8px] w-[17px] h-[17px] opacity-40" viewBox="0 0 15 15"><path d="M1 5l3-3 4 3-3 2zM8 8h6l-2 3v3h-2v-3z" fill="#777" /></svg>
        <span class="ml-[6px] w-[16px] h-[16px] border border-[#b02020] flex items-center justify-center"><svg class="w-[12px] h-[12px]" viewBox="0 0 12 12"><path d="M4 0v7M1 4h6" stroke="#444" /><path d="M6 6h6L9 10v2H8v-2z" fill="#e8a020" /></svg></span>
        <svg class="ml-[6px] w-[6px] h-[4px]"><use href="#arr" /></svg>
        <svg class="ml-[11px] w-[17px] h-[17px] opacity-45" viewBox="0 0 15 15"><path d="M3 5a4 4 0 0 1 7 0" fill="none" stroke="#666" /><path d="M8 8v6M5 11h6" stroke="#666" /></svg>
        <svg class="ml-[8px] w-[17px] h-[17px] opacity-45" viewBox="0 0 15 15"><path d="M1 2h6v4H5v3h3v5h5V9H9" fill="none" stroke="#666" /></svg>
        <svg class="ml-[5px] w-[17px] h-[17px] opacity-45" viewBox="0 0 15 15"><path d="M4 2h7l3 5-3 6H4L1 7z" fill="none" stroke="#666" /><circle cx="7.500" cy="7.500" r="1" fill="#666" /></svg>
        <svg class="ml-[10px] w-[17px] h-[17px] opacity-45" viewBox="0 0 15 15"><path d="M1 4l4-3 4 3v5l-4 3-4-3z" fill="none" stroke="#666" stroke-dasharray="1 1" /><circle cx="10" cy="10" r="3.500" fill="none" stroke="#666" /></svg>
        <svg class="ml-[6px] w-[17px] h-[17px] opacity-50" viewBox="0 0 15 15"><rect x="2" y="2" width="11" height="11" fill="none" stroke="#555" stroke-dasharray="2 1" /></svg>
        <svg class="ml-[3px] w-[6px] h-[4px]"><use href="#arr" /></svg>
        <svg class="ml-[9px] w-[17px] h-[17px] opacity-40" viewBox="0 0 15 15"><path d="M1 5l8-3 5 3v6l-8 3-5-3z" fill="#ccc" stroke="#666" /></svg>
        <svg class="ml-[6px] w-[18px] h-[18px]" viewBox="0 0 15 15"><path d="M1 4l6-3 7 3v8l-7 3-6-3z" fill="#58a4e8" stroke="#3a74b0" /><path d="M1 4l6 3 7-3-7-3z" fill="#e8f2fa" /><path d="M7 1v6L1 4" fill="none" stroke="#d04040" stroke-width=".5" /></svg>
        <i class="ml-[10px] w-px h-[22px] bg-[#ddd]"></i>
        <svg class="ml-[11px] w-[17px] h-[17px]" viewBox="0 0 15 15"><rect x="1" y="1" width="13" height="13" fill="#eef" stroke="#223a80" /><rect x="1" y="1" width="13" height="2" fill="#223a80" /><circle cx="7" cy="8" r="3" fill="none" stroke="#445" /><path d="M1 14l2-2M14 14l-2-2" stroke="#c02020" /></svg>
        <svg class="ml-[8px] w-[17px] h-[17px]" viewBox="0 0 15 15"><rect x="1" y="1" width="13" height="11" fill="#a0b4d8" stroke="#555" /><path d="M7 14l2-7 4 4-1 3z" fill="#e8c898" stroke="#a08050" stroke-width=".5" /></svg>
        <svg class="ml-[8px] w-[17px] h-[17px]" viewBox="0 0 15 15"><path d="M3 8a5 5 0 0 1 8-4l2-1v5H8l2-1.500A3 3 0 0 0 5 8zM12 8a5 5 0 0 1-8 4l-2 1V8h5l-2 1.500A3 3 0 0 0 10 8z" fill="#2a50a0" /></svg>
        <svg class="ml-[9px] w-[17px] h-[17px]" viewBox="0 0 15 15"><path d="M1 9l7-5 3 5-7 5z" fill="#4a70d0" /><circle cx="12" cy="3" r="1" fill="#d02020" /></svg>
        <svg class="ml-[6px] w-[17px] h-[17px] opacity-50" viewBox="0 0 15 15"><path d="M5 1h6v6H5zM1 9l6-2 6 2v5H3z" fill="none" stroke="#555" /></svg>
        <span class="ml-[10px] w-[17px] h-[17px] bg-white border-2 border-[#3a5aa8] flex items-center justify-center"><i class="w-[9px] h-[9px] bg-[#d84040]"></i></span>
        <svg class="ml-[9px] w-[6px] h-[4px]"><use href="#arr" /></svg>
        <svg class="ml-[10px] w-[18px] h-[16px]" viewBox="0 0 15 15"><path d="M2 12l3-9 5-1 3 6 1 4-3 1H3z" fill="#888" stroke="#444" /><path d="M4 9h8" stroke="#ddd" /></svg>
        <svg class="ml-[8px] w-[6px] h-[4px]"><use href="#arr" /></svg>
        <svg class="ml-[10px] w-[17px] h-[17px]" viewBox="0 0 15 15"><path d="M1 3l6-2 7 2v9l-7 3-6-3z" fill="#5a8ad8" stroke="#3a5a98" /><path d="M1 3l6 3 7-3" fill="none" stroke="#c8dcf0" /></svg>
        <svg class="ml-[7px] w-[6px] h-[4px]"><use href="#arr" /></svg>
        <svg class="ml-[8px] w-[17px] h-[17px]" viewBox="0 0 15 15"><path d="M5 8l5-6 4 5-5 6z" fill="#5080d0" stroke="#2a4a90" /><path d="M1 2v11l5-5z" fill="#20a040" /><path d="M1 8l4 0" stroke="#d02020" stroke-width="2" /></svg>
        <svg class="ml-[6px] w-[6px] h-[4px]"><use href="#arr" /></svg>
        <i class="ml-[9px] w-px h-[22px] bg-[#ddd]"></i>
        <div class="flex-1 flex justify-end pr-[6px]"><svg class="w-[7px] h-[5px]"><use href="#arr" /></svg></div>
      </section>

      <!-- main -->
      <main class="h-[838px] flex shrink-0 bg-white">
        <!-- resource bar -->
        <aside class="w-[26px] shrink-0 bg-[#d6d6d6] border-r border-[#b0b0b0] flex flex-col items-center">
          <svg class="mt-[5px] w-[15px] h-[15px]" viewBox="0 0 15 15"><circle cx="7.500" cy="7.500" r="4.500" fill="none" stroke="#333" stroke-width="2" /><path d="M7.500 0v3M7.500 12v3M0 7.500h3M12 7.500h3M2 2l2 2M11 11l2 2M2 13l2-2M11 4l2-2" stroke="#333" stroke-width="1.400" /></svg>
          <svg class="mt-[31px] w-[24px] h-[24px]" viewBox="0 0 24 24"><path d="M2 2l4-2 4 2v5l3 1v5H2z" fill="#f4c038" stroke="#a87818" stroke-width=".7" /><path d="M6 16v7M6 20h7" stroke="#1030a0" /><rect x="14" y="15" width="7" height="7" fill="#f4d048" stroke="#a87818" stroke-width=".7" /><path d="M14 11h8" stroke="#111" /></svg>
          <svg class="mt-[18px] w-[24px] h-[24px]" viewBox="0 0 24 24"><path d="M4 1v10l7-5zM20 1v10l-7-5z" fill="#1010c0" /><rect x="2" y="14" width="8" height="8" fill="#f8e060" stroke="#333" /><path d="M14 12l8 10h-8z" fill="#d01010" /><path d="M12 0v24" stroke="#555" stroke-dasharray="2 1" /></svg>
          <svg class="mt-[18px] w-[24px] h-[26px]" viewBox="0 0 24 26"><rect x="1" y="1" width="10" height="8" rx="2" fill="#e8b0c0" stroke="#802040" /><path d="M5 12v11M5 18h7" stroke="#1030a0" /><circle cx="16" cy="18" r="4" fill="none" stroke="#802040" /><circle cx="16" cy="18" r="1.500" fill="#802040" /><path d="M13 10h8" stroke="#111" /></svg>
          <div class="mt-[6px] w-[26px] h-[44px] bg-white flex items-center justify-center"><svg class="w-[24px] h-[26px]" viewBox="0 0 24 26"><rect x="3" y="1" width="4" height="9" fill="#3a60c8" /><path d="M7 2h9M7 5h7M7 8h5" stroke="#2a80a0" /><path d="M5 13v11M5 19h8" stroke="#1030a0" /><path d="M14 15v6h6l-2-3z" fill="#fff" stroke="#1030a0" /><path d="M18 10h4" stroke="#111" /></svg></div>
          <svg class="mt-[9px] w-[25px] h-[24px]" viewBox="0 0 25 24"><path d="M0 10 18 0v10L4 20H0z" fill="#f0a898" stroke="#c06050" stroke-width=".5" /><path d="M10 12l14-4v8l-12 4z" fill="#2080d8" /><path d="M10 12l4 2 10-5" fill="#e8b038" /><rect x="14" y="12" width="6" height="3" fill="#f08018" /></svg>
          <svg class="mt-[17px] w-[24px] h-[24px]" viewBox="0 0 24 24"><rect x="2" y="9" width="13" height="12" fill="#ddd" stroke="#333" /><path d="M5 9v12M9 9v12" stroke="#333" /><path d="M17 15l5-4M17 19h6" stroke="#333" /><rect x="10" y="2" width="5" height="5" fill="#e86030" /><rect x="15" y="1" width="6" height="6" fill="#fff" stroke="#d02020" /></svg>
          <svg class="mt-[18px] w-[24px] h-[24px]" viewBox="0 0 24 24"><rect x="2" y="8" width="5" height="14" fill="#e8b030" /><rect x="7" y="4" width="5" height="18" fill="#30a840" /><rect x="12" y="6" width="5" height="16" fill="#d04030" /><rect x="17" y="3" width="5" height="19" fill="#3070c8" /></svg>
          <svg class="mt-[24px] w-[24px] h-[38px]" viewBox="0 0 24 38"><path d="M6 8a8 8 0 0 1 12 0M3 5a12 12 0 0 1 18 0" fill="none" stroke="#2060b0" stroke-width="1.500" /><circle cx="12" cy="22" r="9" fill="#2a70c8" stroke="#c8d8f0" /><rect x="11" y="20" width="2.500" height="7" fill="#fff" /><rect x="11" y="16" width="2.500" height="2.500" fill="#fff" /></svg>
          <svg class="mt-[24px] w-[24px] h-[24px]" viewBox="0 0 24 24"><rect x="3" y="2" width="18" height="20" fill="#e0f0f0" stroke="#3a8a9a" /><circle cx="12" cy="12" r="6" fill="none" stroke="#2a60a0" stroke-width="2" /><circle cx="12" cy="12" r="2" fill="#208060" /></svg>
          <svg class="mt-[28px] w-[24px] h-[24px]" viewBox="0 0 24 24"><circle cx="12" cy="12" r="10.500" fill="#f0f2f6" stroke="#8a98a8" stroke-width="2" /><path d="M12 5v7l5 2" fill="none" stroke="#203070" stroke-width="1.500" /></svg>
          <svg class="mt-[19px] w-[24px] h-[26px]" viewBox="0 0 24 26"><defs><linearGradient id="rb" x1="0" y1="0" x2="0" y2="1"><stop offset="0" stop-color="#e01020" /><stop offset=".35" stop-color="#f8e010" /><stop offset=".65" stop-color="#18c040" /><stop offset="1" stop-color="#1040e0" /></linearGradient></defs><rect x="2" y="2" width="8" height="22" fill="url(#rb)" /><path d="M11 3l9 20" stroke="#333" stroke-width="2" /><path d="M12 1l2 3-3 1z" fill="#fff" /></svg>
          <svg class="mt-[16px] w-[24px] h-[24px]" viewBox="0 0 24 24"><rect x="3" y="2" width="6" height="18" fill="#3a70d8" /><path d="M9 3h13L13 9l7 11" fill="none" stroke="#333" stroke-width="1.500" /><path d="M2 20h9l-4 3z" fill="#e8c828" /></svg>
          <svg class="mt-[17px] w-[24px] h-[24px]" viewBox="0 0 24 24"><path d="M17 2l4 3-12 12-3-3z" fill="#777" /><path d="M4 12l6 6-4 4H2v-5z" fill="#999" /><path d="M2 21l7-3-3-3z" fill="#e86020" /><path d="M14 1h6l-4 4z" fill="#555" /></svg>
          <svg class="mt-[18px] w-[24px] h-[24px]" viewBox="0 0 24 24"><rect x="1" y="9" width="12" height="12" fill="#e8e8e8" stroke="#111" /><path d="M4 9v12M8 9v12" stroke="#111" /><path d="M15 14l6-3M15 20h7" stroke="#111" /><path d="M11 5h4l2-3h5v6H11z" fill="#f0d050" stroke="#80701a" stroke-width=".6" /></svg>
        </aside>

        <!-- operation navigator -->
        <div class="w-[888px] shrink-0 border-r border-[#a8a8a8] flex flex-col">
          <div class="h-[28px] flex items-center justify-between pl-[10px] pr-[7px] pt-[1px] text-[11.500px]"><span>工序导航器 - 程序顺序</span><span class="mt-[2px] w-[12px] h-[11px] border border-[#222] border-t-[2px]"></span></div>
          <div class="ml-[5px] w-[873px] border border-[#d4d4d4] flex flex-col pt-px pl-px">
            <div class="h-[21px] grid grid-cols-[200px_38px_109px_48px_56px_48px_52px_61px_61px_83px_73px_41px] bg-[#f0f0f0] border-b border-[#c8c8c8] text-[12px] items-center overflow-hidden">
              <span class="pl-[7px] border-r border-[#d0d0d0] h-full leading-[21px]">名称</span>
              <span class="pl-[6px] border-r border-[#d0d0d0] h-full leading-[21px]">刀轨</span>
              <span class="pl-[6px] border-r border-[#d0d0d0] h-full leading-[21px]">刀具</span>
              <span class="pl-[6px] border-r border-[#d0d0d0] h-full leading-[21px] whitespace-nowrap">刀具号</span>
              <span class="pl-[6px] border-r border-[#d0d0d0] h-full leading-[21px]">时间</span>
              <span class="pl-[6px] border-r border-[#d0d0d0] h-full leading-[21px] whitespace-nowrap">几何体</span>
              <span class="pl-[6px] border-r border-[#d0d0d0] h-full leading-[21px]">余量</span>
              <span class="pl-[6px] border-r border-[#d0d0d0] h-full leading-[21px] whitespace-nowrap">底面余量</span>
              <span class="pl-[6px] border-r border-[#d0d0d0] h-full leading-[21px] whitespace-nowrap">切削深度</span>
              <span class="pl-[6px] border-r border-[#d0d0d0] h-full leading-[21px]">进给</span>
              <span class="pl-[6px] border-r border-[#d0d0d0] h-full leading-[21px]">速度</span>
              <span class="pl-[6px] h-full leading-[21px] whitespace-nowrap overflow-hidden">过切检</span>
            </div>
            <div class="flex">
              <div id="rows" class="relative w-[853px] h-[758px] overflow-hidden"></div>
              <!-- vertical scrollbar -->
              <div class="w-[18px] pl-[1px] bg-[#f0f0f0] flex flex-col items-center border-l border-[#e4e4e4]">
                <svg class="mt-[8px] w-[7px] h-[4px] rotate-180"><use href="#arr" /></svg>
                <div class="mt-[7px] w-[15px] h-[436px] rounded-[2px] border border-[#b4b4b4] bg-linear-to-r from-[#f8f8f8] via-[#dcdcdc] to-[#c0c0c0]"></div>
                <svg class="mt-[291px] w-[7px] h-[4px]"><use href="#arrg" /></svg>
              </div>
            </div>
            <!-- horizontal scrollbar -->
            <div class="h-[15px] bg-[#f0f0f0] flex items-center">
              <svg class="ml-[7px] w-[4px] h-[7px]" viewBox="0 0 4 7"><path d="M4 0v7L0 3.500z" fill="#333" /></svg>
              <div class="ml-[9px] w-[780px] h-[14px] rounded-[2px] border border-[#a8a8a8] bg-linear-to-b from-[#f0f0f0] via-[#d8d8d8] to-[#c0c0c0] flex items-center justify-center"><svg class="w-[8px] h-[7px]" viewBox="0 0 8 7"><path d="M1 0v7M3 0v7M5 0v7M7 0v7" stroke="#555" /></svg></div>
              <svg class="ml-[41px] w-[4px] h-[7px]" viewBox="0 0 4 7"><path d="M0 0v7l4-3.500z" fill="#333" /></svg>
            </div>
          </div>
          <div class="mt-[2px] ml-[5px] w-[873px] h-[4px] border-y border-[#a8a8a8] bg-[#e4e4e4]"></div>
        </div>

        <!-- graphics window -->
        <div class="flex-1 flex flex-col">
          <div class="h-[22px] flex items-stretch border-b border-[#559fb9]">
            <div class="w-[266px] bg-[#559fb9] text-white flex items-center pl-[8px] text-[12.500px] whitespace-nowrap">
              <svg class="w-[12px] h-[14px]" viewBox="0 0 12 14"><rect x="2" y="1" width="3" height="10" fill="#2a40a8" /><path d="M5 3h6M5 6h5M5 9h3" stroke="#8898b0" /><path d="M3 11l1 3H2z" fill="#e8d040" /></svg>
              <span class="ml-[6px]">GL2021-005-010&nbsp; 棱镜压板_step.prt</span>
              <svg class="ml-[7px] w-[9px] h-[11px]" viewBox="0 0 9 11"><path d="M1 1h5l2 2v7H1z" fill="none" stroke="#fff" stroke-width="1.300" /><path d="M3 1v4h3" stroke="#fff" /></svg>
              <svg class="ml-[6px] w-[9px] h-[9px]" viewBox="0 0 9 9"><path d="M1 1l7 7M8 1 1 8" stroke="#c8e4ee" stroke-width="1.500" /></svg>
            </div>
            <div class="flex-1 bg-white"></div>
          </div>
          <div class="relative flex-1 bg-linear-to-b from-[#b8b9bb] via-[#e6e7e9] via-78% to-[#e8e9eb] overflow-hidden border-l border-[#9a9a9a]">
            <svg class="absolute left-0 top-0 w-[999px] h-[816px]" viewBox="0 0 999 816" xmlns="http://www.w3.org/2000/svg">
              <defs>
                <linearGradient id="hl" x1="0" y1="0" x2="1" y2="0"><stop offset="0" stop-color="#5a3400" /><stop offset=".55" stop-color="#6a3e00" /><stop offset="1" stop-color="#d89020" /></linearGradient>
                <linearGradient id="sd" x1="0" y1="0" x2="1" y2="0"><stop offset="0" stop-color="#a86400" /><stop offset=".09" stop-color="#663c00" /><stop offset=".93" stop-color="#663c00" /><stop offset="1" stop-color="#b87000" /></linearGradient>
                <clipPath id="h1"><ellipse cx="303" cy="197" rx="54" ry="65" /></clipPath>
                <clipPath id="h2"><ellipse cx="1238" cy="200" rx="54" ry="65" /></clipPath>
                <clipPath id="h3"><ellipse cx="315" cy="960" rx="54" ry="65" /></clipPath>
                <clipPath id="h4"><ellipse cx="1250" cy="962" rx="54" ry="65" /></clipPath>
              </defs>
              <!-- part, drawn in the crop's coordinates -->
              <g transform="translate(85 193) scale(.4337 .3333)">
                <path d="M65 980 L68 1080 Q90 1190 180 1192 L1385 1197 Q1490 1180 1493 1000 Z" fill="url(#sd)" stroke="#4a3000" stroke-width="1" vector-effect="non-scaling-stroke" />
                <path d="M165 42 L1370 45 Q1480 50 1480 165 L1492 1000 Q1485 1118 1380 1120 L185 1115 Q75 1110 66 1000 L60 160 Q62 45 165 42Z" fill="#ffd211" stroke="#5a4a10" stroke-width="1" vector-effect="non-scaling-stroke" />
                <g vector-effect="non-scaling-stroke">
                  <ellipse cx="303" cy="197" rx="54" ry="65" fill="url(#hl)" stroke="#333" stroke-width="1" vector-effect="non-scaling-stroke" />
                  <ellipse cx="303" cy="235" rx="54" ry="52" fill="#d2d3d5" clip-path="url(#h1)" />
                  <ellipse cx="1238" cy="200" rx="54" ry="65" fill="url(#hl)" stroke="#333" stroke-width="1" vector-effect="non-scaling-stroke" />
                  <ellipse cx="1238" cy="238" rx="54" ry="52" fill="#d2d3d5" clip-path="url(#h2)" />
                  <ellipse cx="315" cy="960" rx="54" ry="65" fill="url(#hl)" stroke="#333" stroke-width="1" vector-effect="non-scaling-stroke" />
                  <ellipse cx="315" cy="998" rx="54" ry="52" fill="#e0e1e3" clip-path="url(#h3)" />
                  <ellipse cx="1250" cy="962" rx="54" ry="65" fill="url(#hl)" stroke="#333" stroke-width="1" vector-effect="non-scaling-stroke" />
                  <ellipse cx="1250" cy="1000" rx="54" ry="52" fill="#e0e1e3" clip-path="url(#h4)" />
                </g>
                <!-- upper step -->
                <rect x="205" y="290" width="1130" height="32" fill="#c67700" stroke="#4a3000" stroke-width="1" vector-effect="non-scaling-stroke" />
                <rect x="205" y="322" width="1125" height="48" fill="#663c00" stroke="#3a2800" stroke-width="1" vector-effect="non-scaling-stroke" />
                <path d="M1330 370 L1335 295 Q1345 248 1390 248 Q1445 250 1446 345 L1442 360 Q1440 308 1390 308 Q1340 310 1330 370Z" fill="url(#hl)" stroke="#4a3000" stroke-width="1" vector-effect="non-scaling-stroke" />
                <path d="M205 370 L210 295 Q205 260 180 250 L190 310 Z" fill="#a86400" />
                <!-- pocket contour -->
                <path d="M107 560 L107 850 Q110 915 165 915 Q218 910 218 858 L1342 862 Q1350 918 1400 918 Q1452 915 1454 860 L1442 345" fill="none" stroke="#5a4a10" stroke-width="1" vector-effect="non-scaling-stroke" />
                <path d="M218 870 L1345 877" fill="none" stroke="#5a4a10" stroke-width="1" vector-effect="non-scaling-stroke" />
                <!-- through window -->
                <path d="M225 527 L1310 530 Q1388 535 1388 610 L1388 670 Q1385 750 1305 752 L225 748 Q155 740 155 670 L155 600 Q160 525 225 527Z" fill="#d4d5d7" />
                <path d="M155 600 Q160 525 225 527 L1310 530 Q1388 535 1388 610" fill="none" stroke="#333" stroke-width="2" vector-effect="non-scaling-stroke" />
                <path d="M1388 610 L1388 670 Q1385 750 1305 752 L225 748 Q155 740 155 670 L155 600" fill="none" stroke="#6a5a20" stroke-width="1" vector-effect="non-scaling-stroke" />
                <!-- work coordinate triad -->
                <path d="M772 295 L770 640" stroke="#28a028" stroke-width="1.500" vector-effect="non-scaling-stroke" />
                <path d="M772 295 L781 350 L765 350Z" fill="#28a028" />
                <path d="M770 535 L778 590 L770 640 L762 590Z" fill="#30b030" />
                <path d="M787 465 L795 490 L785 498 L778 490Z" fill="#0a2ca0" />
                <path d="M785 495 L778 580" stroke="#0a2ca0" stroke-width="1.500" vector-effect="non-scaling-stroke" />
                <path d="M778 580 H1015" stroke="#d83030" stroke-width="1.500" vector-effect="non-scaling-stroke" />
                <path d="M968 572 L1015 581 L968 590Z" fill="#d83030" />
                <path d="M835 571 L873 581 L835 590Z" fill="#b8ac8c" />
                <path d="M775 495 L785 530 L770 530Z" fill="#b8ac8c" />
                <circle cx="780" cy="548" r="9" fill="#6a6030" />
                <path d="M640 656 L700 648 L760 656 L700 664Z" fill="#d83030" />
                <path d="M766 660 L772 695 L765 722 L759 695Z" fill="#0a2ca0" />
              </g>
              <g font-family="'Liberation Sans'" font-size="12">
                <text x="425" y="290" fill="#3aa838">YM</text>
                <text x="409" y="344" fill="#1a50e0">ZM</text>
                <text x="427" y="340" fill="#b8ac8c">Y</text>
                <text x="432" y="360" fill="#3aa838">C</text>
                <text x="463" y="403" fill="#b8ac8c">X</text>
                <text x="511" y="403" fill="#d04048">XM</text>
                <text x="363" y="406" fill="#d85058">XC</text>
                <text x="419" y="444" fill="#1a50e0">ZC</text>
              </g>
              <!-- view triad, bottom left -->
              <g transform="translate(65 748)">
                <rect x="0" y="0" width="26" height="35" fill="#d4d4d4" stroke="#b0b0b0" />
                <path d="M0 11h26M0 25h26" stroke="#b0b0b0" />
                <path d="M0 0H36" stroke="#d83030" stroke-width="1.500" /><path d="M33 -3 43 0 33 3Z" fill="#d83030" />
                <path d="M0 0V32" stroke="#28a028" stroke-width="1.500" /><path d="M-3 30 0 40 3 30Z" fill="#30b030" />
                <path d="M-1 4 V22 L-4 24" stroke="#1a50e0" fill="none" />
                <circle cx="0" cy="0" r="3.500" fill="#d8d8d8" stroke="#a0a0a0" />
                <text x="46" y="5" font-family="'Liberation Sans'" font-size="11" fill="#d85058">X</text>
                <text x="-3" y="50" font-family="'Liberation Sans'" font-size="11" fill="#3aa838">Y</text>
              </g>
            </svg>
            <!-- speed ball -->
            <div class="absolute left-[795px] top-[633px] w-[66px] h-[66px] rounded-full bg-[#dfe4e3] p-[3px]">
              <div class="w-full h-full rounded-full bg-[conic-gradient(#2ad060_0_73%,#f4f4f4_73%_100%)] p-[3px]">
                <div class="w-full h-full rounded-full bg-white flex flex-col items-center border border-[#1ac050]">
                  <span class="mt-[3px] pl-[1px] font-['Liberation_Sans'] text-[#333] leading-[24px] text-[23px]">73<span class="text-[11px]">%</span></span>
                  <span class="flex items-center gap-[4px] text-[8.500px] leading-[10px] font-['Liberation_Sans']"><span class="text-[#10a040] font-bold">↓</span>0K/s</span>
                </div>
              </div>
            </div>
          </div>
        </div>
      </main>

      <!-- status line -->
      <div class="h-[22px] flex items-center shrink-0 bg-white border-t border-[#a8a8a8] text-[11.700px] font-bold">
        <span class="ml-[910px] w-[332px] whitespace-nowrap">正加载 GL2021-005-010&nbsp; 棱镜压板_step.prt 自 D:\K-2022\6.23</span>
        <svg class="ml-[602px] w-[14px] h-[14px]" viewBox="0 0 15 16"><path d="M1 4V1h3M11 1h3v3M14 12v3h-3M4 15H1v-3" fill="none" stroke="#777" /><rect x="4" y="4" width="7" height="8" fill="#2a4a8a" /><rect x="5" y="7" width="5" height="4" fill="#9cc" /></svg>
      </div>

      <!-- windows taskbar -->
      <footer class="h-[40px] flex items-center shrink-0 bg-[#8297ae] border-t border-[#3a4450] text-[12.500px] text-white">
        <svg class="ml-[3px] w-[36px] h-[36px]" viewBox="0 0 36 36"><defs><radialGradient id="orb" cx=".5" cy=".35" r=".7"><stop offset="0" stop-color="#6ec0e8" /><stop offset=".6" stop-color="#1a6aa8" /><stop offset="1" stop-color="#0c3050" /></radialGradient></defs><circle cx="18" cy="18" r="17" fill="url(#orb)" stroke="#3a5870" /><path d="M9 12q4-2 8 0v6q-4-2-8 0z" fill="#e84020" /><path d="M18 12q4 2 8 0v6q-4 2-8 0z" fill="#70c030" /><path d="M9 19q4-2 8 0v6q-4-2-8 0z" fill="#2a90e0" /><path d="M18 19q4 2 8 0v6q-4 2-8 0z" fill="#f8c020" /></svg>
        <span class="ml-[14px] w-[6px] h-[36px] bg-[radial-gradient(#394858_1px,transparent_1px)] bg-size-[3px_3px]"></span>
        <div class="ml-[8px] w-[160px] h-[38px] rounded-[3px] border border-white/50 bg-linear-to-b from-[#9fb0c4] to-[#8297ae] flex items-center pl-[8px] whitespace-nowrap">
          <svg class="w-[36px] h-[36px]" viewBox="0 0 36 36"><ellipse cx="19" cy="20" rx="12" ry="15" fill="#2a8ae0" /><path d="M10 30c8 4 16-2 20-14-1 14-12 22-22 17z" fill="#f09820" /><path d="M6 2l14 4-7 14z" fill="#e02030" /></svg>
          <span class="ml-[1px]">NX 12.0.2.9 - 加工</span>
        </div>
        <div class="ml-[1px] w-[159px] h-[38px] rounded-[3px] border border-white/60 border-l-[#7ad070] bg-linear-to-b from-[#b8c6d6] to-[#9db0c4] flex items-center pl-[8px] whitespace-nowrap">
          <svg class="w-[36px] h-[36px]" viewBox="0 0 36 36"><ellipse cx="19" cy="20" rx="12" ry="15" fill="#2a8ae0" /><path d="M10 30c8 4 16-2 20-14-1 14-12 22-22 17z" fill="#f09820" /><path d="M6 2l14 4-7 14z" fill="#e02030" /></svg>
          <span class="ml-[1px]">NX 12.0.2.9 - 加工</span>
        </div>
        <div class="ml-[3px] w-[158px] h-[38px] rounded-[3px] border border-white/50 bg-linear-to-b from-[#9fb0c4] to-[#8297ae] flex items-center pl-[10px] whitespace-nowrap">
          <svg class="w-[24px] h-[34px]" viewBox="0 0 24 34"><path d="M2 6h9l6-3v26l-9 4-6-3z" fill="#f4dc88" stroke="#b89848" /><path d="M11 6h9v24h-12z" fill="#f8e8a8" stroke="#c8a858" /></svg>
          <span class="ml-[11px]">D:\UG12.0刀路模...</span>
        </div>
        <div class="ml-[4px] w-[159px] h-[38px] rounded-[3px] border border-white/50 bg-linear-to-b from-[#9fb0c4] to-[#8297ae] flex items-center pl-[10px] whitespace-nowrap">
          <svg class="w-[25px] h-[30px]" viewBox="0 0 25 30"><path d="M13 2h11v6l-4 10v10H8V16l5-6z" fill="#3a90c8" /><path d="M6 0l1 5 5 1-5 1-1 5-1-5-5-1 5-1z" fill="#f8f060" /></svg>
          <span class="ml-[10px]">后处理构造器</span>
        </div>
        <div class="ml-[3px] w-[159px] h-[38px] rounded-[3px] border border-white/50 bg-linear-to-b from-[#9fb0c4] to-[#8297ae] flex items-center pl-[9px] whitespace-nowrap">
          <svg class="w-[27px] h-[36px]" viewBox="0 0 27 36"><rect x=".5" y=".5" width="26" height="35" fill="#e8f0e8" stroke="#111" /><path d="M1 1h25L13.500 18 26 35H1L13.500 18z" fill="#3a7a68" /><path d="M1 35h25L13.500 18z" fill="#2a2a9a" /><path d="M4 6h19l-9.500 11z" fill="#f0f0f0" /></svg>
          <span class="ml-[8px]">NX/后处理构造器...</span>
        </div>
        <div class="ml-[2px] w-[160px] h-[38px] rounded-[3px] border border-white/50 bg-linear-to-b from-[#9fb0c4] to-[#8297ae] flex items-center pl-[9px] whitespace-nowrap">
          <svg class="w-[30px] h-[32px]" viewBox="0 0 30 32"><ellipse cx="15" cy="16" rx="14" ry="15" fill="#f4f4f4" /><path d="M8 26 14 10l8 4 2 12z" fill="#3060b0" /><path d="M12 5l6 8-8 4z" fill="#c02828" /><path d="M4 20l14-6" stroke="#2090d0" stroke-width="3" /></svg>
          <span class="ml-[7px]">UG爱好者--子龙...</span>
        </div>
        <span class="ml-[526px] w-[6px] h-[36px] bg-[radial-gradient(#394858_1px,transparent_1px)] bg-size-[3px_3px]"></span>
        <div class="relative flex-1 h-full flex items-center">
          <svg class="ml-[13px] w-[16px] h-[16px]" viewBox="0 0 16 16"><rect x="1" y="5" width="14" height="9" rx="1" fill="#d8dce0" stroke="#556" /><path d="M3 8h10M3 11h10" stroke="#667" stroke-dasharray="1 1" /><path d="M12 5c0-3 2-3 2-4" stroke="#556" fill="none" /></svg>
          <svg class="ml-[6px] w-[18px] h-[22px]" viewBox="0 0 18 22"><ellipse cx="9" cy="9" rx="6" ry="8" fill="#111" /><ellipse cx="9" cy="14" rx="5" ry="6" fill="#fff" /><path d="M5 10h8l-2 3H7z" fill="#e8a020" /><path d="M3 15h12v2H3z" fill="#d02020" /><path d="M4 20h4M10 20h4" stroke="#e8a020" stroke-width="2" /></svg>
          <svg class="ml-[7px] w-[16px] h-[20px]" viewBox="0 0 16 20"><rect x="1" y="1" width="14" height="18" rx="3" fill="#1a3a8a" /><circle cx="8" cy="10" r="5" fill="none" stroke="#fff" stroke-width="1.400" /><circle cx="8" cy="10" r="1.500" fill="#fff" /></svg>
          <svg class="ml-[8px] w-[16px] h-[18px]" viewBox="0 0 16 18"><path d="M8 1c3 0 4 3 4 6 0 3 2 5 3 7H1c1-2 3-4 3-7 0-3 1-6 4-6z" fill="#fff" /><circle cx="8" cy="16" r="1.500" fill="#fff" /></svg>
          <svg class="ml-[9px] w-[16px] h-[20px]" viewBox="0 0 16 20"><rect x="0" y="1" width="16" height="18" rx="3" fill="#fff" /><circle cx="8" cy="7" r="3" fill="none" stroke="#2090e0" stroke-width="1.500" /><circle cx="5" cy="12" r="3" fill="none" stroke="#e04060" stroke-width="1.500" /><circle cx="11" cy="12" r="3" fill="none" stroke="#20a0a0" stroke-width="1.500" /></svg>
          <svg class="ml-[8px] w-[14px] h-[18px]" viewBox="0 0 14 18"><rect x="3" y="1" width="8" height="5" fill="#f0f4f8" /><rect x="1" y="6" width="12" height="6" fill="#c0ccd8" /><rect x="3" y="12" width="8" height="5" fill="#f0f4f8" /></svg>
          <svg class="ml-[10px] w-[14px] h-[18px]" viewBox="0 0 14 18"><rect x="3" y="1" width="10" height="8" fill="#1880d8" /><rect x="0" y="8" width="8" height="8" fill="#10a0e8" /></svg>
          <svg class="ml-[9px] w-[16px] h-[18px]" viewBox="0 0 16 18"><circle cx="8" cy="9" r="7.500" fill="#68a818" /><circle cx="8" cy="9" r="4" fill="#f0d020" /><path d="M8 5v8M4 9h8" stroke="#405010" /></svg>
          <svg class="ml-[8px] w-[14px] h-[22px]" viewBox="0 0 14 22"><path d="M2 2h10v18" fill="none" stroke="#fff" stroke-width="1.500" /><rect x="1" y="1" width="6" height="6" fill="none" stroke="#fff" /><path d="M5 10v10" stroke="#fff" /></svg>
          <svg class="ml-[10px] w-[15px] h-[20px]" viewBox="0 0 15 20"><path d="M1 7h3l4-5v16l-4-5H1z" fill="#e8e8e8" /><circle cx="10" cy="13" r="4" fill="#d02020" /><path d="M8 11l4 4" stroke="#fff" /></svg>
          <span class="absolute right-0 top-0 w-[14px] h-full border-l border-[#3a4450] bg-[#93a5b8]"></span>
          <span class="absolute left-[297px] top-[3px] text-[12px] leading-[16px]">8:47</span>
          <span class="absolute left-[161px] top-[18px] text-[14px] leading-[18px] text-white/75 whitespace-nowrap">UG爱好者论坛@5855655615</span>
        </div>
      </footer>

      <!-- post builder message box, sits over the panes -->
      <div class="absolute left-[828px] top-[450px] w-[252px] h-[131px] bg-[#f0f0f0] border border-[#a0a0a0] flex flex-col">
        <div class="h-[27px] bg-[#55a0b9] text-[#f0f8fa] text-[12.500px] flex items-center pl-[9px] shrink-0">NX/后处理消息</div>
        <div class="flex pl-[15px] pt-[8px]">
          <svg class="w-[32px] h-[32px] mt-[1px]" viewBox="0 0 32 32"><defs><radialGradient id="inf" cx=".4" cy=".3" r=".8"><stop offset="0" stop-color="#6a90f0" /><stop offset=".7" stop-color="#1a40b0" /><stop offset="1" stop-color="#0c2880" /></radialGradient></defs><circle cx="16" cy="16" r="14.500" fill="url(#inf)" stroke="#a8a8b0" stroke-width="2" /><rect x="14" y="13" width="4" height="12" rx="1" fill="#e8e8f0" /><circle cx="16" cy="9" r="2.200" fill="#e8e8f0" /></svg>
          <p class="ml-[14px] text-[12px] leading-[17.500px] text-[#222] whitespace-nowrap">必要提示：刀具名称:D80光面铝,<br />刀具号（T）设置错误!<br />正确值为大于0小于25.</p>
        </div>
        <div class="mt-[7px] ml-[94px] w-[63px] h-[25px] bg-[#74b0c6] p-[3px]"><div class="h-full border border-dotted border-[#222] text-white text-[12px] flex items-center justify-center">确定(O)</div></div>
      </div>

      <!-- red annotation drawn over the screenshot -->
      <svg class="absolute left-[800px] top-[380px] w-[360px] h-[240px] overflow-visible" viewBox="0 0 1080 720" xmlns="http://www.w3.org/2000/svg">
        <path d="M72 175 L150 162 L250 125 L330 90 L430 70 L560 68 L710 68 L780 100 L850 160 L900 230 L930 320 L932 375 L890 450 L830 510 L750 575 L660 600 L580 625 L450 628 L350 640 L250 620 L140 570 L75 490 L45 400 L65 300 L130 185 L188 110" fill="none" stroke="#f5403f" stroke-width="20" stroke-linejoin="round" stroke-linecap="round" />
      </svg>
    </div>

    <script>
      // [level, kind, name, time, selected] for folders; [level, kind, op] for operations
      const d = (n, s, t, no, tm, g, a, b, c, f, v, plain) => ({ n, s, t, no, tm, g, a, b, c, f, v, plain });
      const rows = [
        [0, "root", "NC_PROGRAM", "00:06:42"],
        [1, "unused", "未用项", "00:00:00"],
        [1, "bulb", "1", "00:04:14"],
        [2, "bulb", "GL2021510YB-A-0", "00:04:14", true],
        [3, "bulb", "GL2021510YB-A-1", "00:00:21"],
        [4, "opm", d("光面", "b", "D80光面铝", "0", "00:00:09", "W1", "0.0000", "0.1500", "0.0000", "1000", "5000")],
        [3, "bulb", "GL2021510YB-A-2", "00:00:14"],
        [4, "opd", d("打点", "c", "D6X45倒角刀", "10", "00:00:02", "W1", "", "", "1.0000", "1000", "5000")],
        [3, "bulb", "GL2021510YB-A-3", "00:00:25"],
        [4, "opd", d("钻孔_COPY_1...", "c", "E2.9", "16", "00:00:13", "W1", "", "", "7.0000", "200", "1800")],
        [3, "bulb", "GL2021510YB-A-4", "00:00:29"],
        [4, "opm", d("底壁斜插", "c", "D10-粗刀", "2", "00:00:17", "W1", "0.3000", "0.3000", "1.0000", "4000", "8000")],
        [3, "bulb", "GL2021510YB-A-5", "00:00:22"],
        [4, "opm", d("底面斜插开粗", "c", "D8-粗刀", "4", "00:00:10", "W1", "0.2000", "0.0000", "0.5000", "3000", "8000")],
        [3, "bulb", "GL2021510YB-A-6", "00:01:07"],
        [4, "opm", d("清角接顺", "c", "D2-粗刀", "17", "00:00:55", "W1", "0.0000", "0.0000", ".2 mm", "1200", "10000")],
        [3, "bulb", "GL2021510YB-A-7", "00:00:25"],
        [4, "opp", d("2D多层倒角", "c", "D6X45倒角刀", "10", "00:00:10", "W1", "-0.2000", "-1.0000", "", "2000", "8000")],
        [4, "opp", d("2D多层倒角_...", "c", "D6X45倒角刀", "10", "00:00:03", "W1", "-0.5000", "-1.0000", "", "2000", "8000", true)],
        [3, "bulb", "GL2021510YB-A-8", "00:00:20"],
        [4, "opp", d("精修侧面_CO...", "c", "D8-精刀", "5", "00:00:08", "W1", "0.0000", "0.0000", "0.0000", "1200", "8000")],
        [3, "bulb", "GL2021510YB-A-9", "00:00:32"],
        [4, "opm", d("精修侧底_1", "c", "D6-精刀", "7", "00:00:20", "W1", "0.0000", "0.0000", "0.0000", "1500", "8000")],
        [1, "bulb", "GL2021510YB-A-10", "00:00:20"],
        [2, "bulb", "GL2021510YB-A-11", "00:00:20"],
        [3, "opp", d("精修侧面_COPY_...", "c", "D8-精刀", "5", "00:00:08", "W1", "0.0000", "0.0000", "0.0000", "1200", "8000")],
        [1, "bulb", "2", "00:01:20"],
        [2, "bulb", "GL2021510YB-B-0", "00:01:20"],
        [3, "bulb", "GL2021510YB-B-1", "00:00:33"],
        [4, "opm", d("多刀往复", "c", "D10-粗刀", "2", "00:00:21", "W2", "0.0000", "0.3000", "1.0000", "4000", "8000")],
        [3, "bulb", "GL2021510YB-B-2", "00:00:23"],
        [4, "opp", d("多层倒角", "c", "D6X45倒角刀", "10", "00:00:04", "W2", "-0.2000", "-1.0000", "", "2000", "8000")],
        [4, "opp", d("2D多层倒角_...", "c", "D6X45倒角刀", "10", "00:00:02", "W2", "-0.7000", "-1.2000", "", "2000", "8000", true)],
        [4, "opp", d("2D标准倒角", "c", "D6X45倒角刀", "10", "00:00:04", "W2", "-1.3000", "-1.8000", "0.0000", "1000", "8000", true)],
        [3, "bulb", "GL2021510YB-B-3", "00:00:24"],
        [4, "opm", d("精修侧底_1_C...", "c", "D6-精刀", "7", "00:00:12", "W2", "0.0000", "0.0000", "0.0000", "1500", "8000")],
        [1, "no", "3", "00:00:36"],
        [2, "no", "59028-C-0", "00:00:36"],
      ];

      const check = `<svg class="w-[13px] h-[13px]"><use href="#check" /></svg>`;
      const bar = "h-full border-r border-[#ececec] flex items-center pl-[5px] whitespace-nowrap overflow-hidden";

      let html = "";
      let lines = "";
      const parents = [];
      rows.forEach((r, i) => {
        const [lvl, kind] = r;
        const y = 10 + 20 * i;
        // tree guides
        if (lvl > 0) {
          const x = 10 + 19 * (lvl - 1);
          lines += `<path d="M${x} ${y}H${x + 9}M${x} ${y}V${10 + 20 * parents[lvl - 1]}" />`;
        }
        parents[lvl] = i;

        const start = 6 + 19 * (lvl - 1);
        const op = kind.startsWith("op");
        const rowBg = i % 2 ? "bg-[#f9f9f9]" : "bg-white";
        const sel = r[4] === true;
        let name;
        if (kind === "root") {
          name = `<span class="pl-[4px]">${r[2]}</span>`;
        } else if (kind === "unused") {
          name = `<span class="flex items-center" style="padding-left:21px"><svg class="w-[14px] h-[14px]"><use href="#folder" /></svg><span class="ml-[4px]">${r[2]}</span></span>`;
        } else if (op) {
          const o = r[2];
          const st = o.s === "b"
            ? `<svg class="ml-[2px] w-[8px] h-[16px]"><use href="#bulb" /></svg>`
            : `<svg class="w-[13px] h-[13px]"><use href="#check" /></svg>`;
          name = `<span class="flex items-center h-full" style="padding-left:${start + 16}px"><span class="w-[14px] flex">${st}</span><svg class="w-[16px] h-[16px]"><use href="#${kind}" /></svg><span class="ml-[3px] ${o.plain ? "" : "text-[#7e3fe0]"}">${o.n}</span></span>`;
        } else {
          const ic = kind === "no"
            ? `<svg class="w-[14px] h-[14px] -ml-[3px]"><use href="#nosign" /></svg>`
            : `<svg class="w-[8px] h-[17px]"><use href="#bulb" /></svg>`;
          name = `<span class="flex items-center h-full w-full" style="padding-left:${start}px"><span class="w-[9px] h-[9px] mr-[9px] bg-white border border-[#aaa] flex items-center justify-center shrink-0"><i class="w-[5px] h-px bg-[#111]"></i></span><span class="w-[13px] flex shrink-0">${ic}</span><svg class="w-[14px] h-[14px] shrink-0"><use href="#folder" /></svg><span class="ml-[1px] flex-1 h-full flex items-center pl-[3px] text-[12.500px] ${sel ? "bg-[#8bc0d0]" : ""}">${r[2]}</span></span>`;
        }

        const o = op ? r[2] : null;
        const colour = o && !o.plain ? "text-[#7e3fe0]" : "";
        const tm = op ? o.tm : r[3];
        const cellSel = sel ? "bg-[#8bc0d0] border-[#f0f0f0]" : "";
        const unit = (val, u) => (val ? `<span>${val} <span class="text-[11px]">${u}</span></span>` : "");
        html += `<div class="h-[20px] grid grid-cols-[200px_38px_109px_48px_56px_48px_52px_61px_61px_83px_73px_24px] border-b border-[#ececec] ${rowBg}">
          <div class="h-full border-r border-black whitespace-nowrap overflow-hidden flex items-center">${name}</div>
          <div class="${bar} ${cellSel}">${op ? check : ""}</div>
          <div class="${bar} ${cellSel} ${colour}">${op ? o.t : ""}</div>
          <div class="${bar} ${cellSel} ${colour}">${op ? o.no : ""}</div>
          <div class="${bar} ${cellSel} ${colour}">${tm}</div>
          <div class="${bar} ${cellSel} ${colour}">${op ? o.g : ""}</div>
          <div class="${bar} ${cellSel} ${colour}">${op ? o.a : ""}</div>
          <div class="${bar} ${cellSel} ${colour}">${op ? o.b : ""}</div>
          <div class="${bar} ${cellSel} ${colour}">${op ? o.c : ""}</div>
          <div class="${bar} ${cellSel} ${colour}">${op ? unit(o.f, "mmpm") : ""}</div>
          <div class="${bar} ${cellSel} ${colour}">${op ? unit(o.v, "rpm") : ""}</div>
          <div class="h-full flex items-center justify-center pr-[1px] ${sel ? "bg-[#8bc0d0]" : ""}">${op ? check : ""}</div>
        </div>`;
      });
      document.querySelector("#rows").innerHTML =
        html +
        `<svg class="absolute left-0 top-0 w-[200px] h-[760px] pointer-events-none" viewBox="0 0 200 760" fill="none" stroke="#999" stroke-dasharray="1 2">${lines}</svg>`;
    </script>
  </body>
</html>
